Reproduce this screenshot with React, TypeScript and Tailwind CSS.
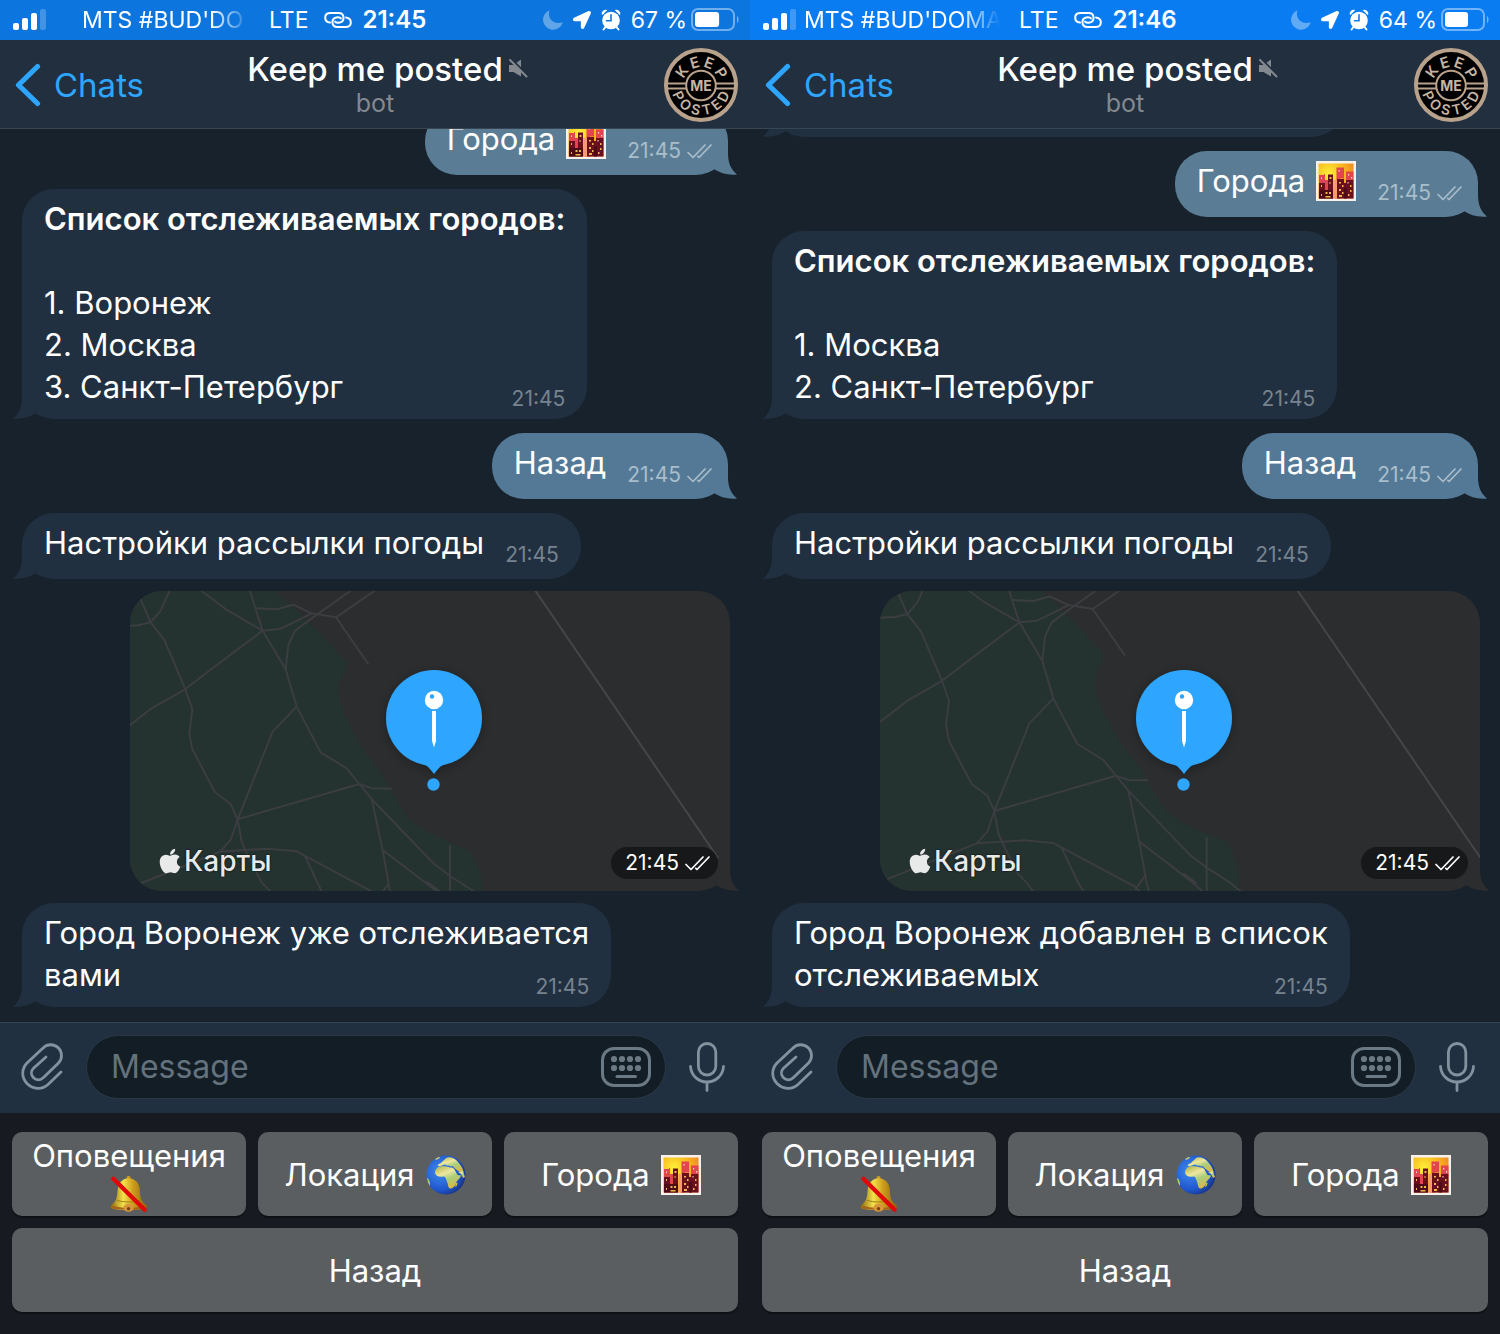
import React, { useId } from "react";
import { FaApple, FaLocationArrow } from "react-icons/fa";

/* ---------- status bar icons ---------- */

function SignalIcon() {
  return (
    <svg width="33" height="22" viewBox="0 0 33 22" fill="#fff" className="shrink-0">
      <rect x="0" y="14" width="6" height="7" rx="2" />
      <rect x="9" y="9" width="6" height="12" rx="2" />
      <rect x="18" y="4" width="6" height="17" rx="2" />
      <rect x="27" y="0" width="6" height="21" rx="2" opacity="0.22" />
    </svg>
  );
}

function HotspotIcon() {
  return (
    <svg width="28" height="18" viewBox="-0.5 -1 28 18" fill="none" stroke="#fff" strokeWidth="2" strokeLinecap="round" className="shrink-0">
      <path d="M5.500 10.600C-1 9.800-1 1 6 1h8c6.500 0 6.500 8.600 1.200 9.600-1.600.3-3.600.3-4.600-1" />
      <path d="M21.500 5.400c6.500.8 6.500 9.600-.5 9.600h-8C6.500 15 6.500 6.400 11.800 5.400c1.600-.3 3.600-.3 4.600 1" />
    </svg>
  );
}

function MoonIcon() {
  return (
    <svg width="20" height="20" viewBox="0 0 20 20" fill="#fff" opacity="0.35" className="shrink-0">
      <path d="M6.500.3C4 7.500 9.500 15.300 19.700 12.300A10 10 0 1 1 6.500.3z" />
    </svg>
  );
}

function AlarmIcon({ cut }: { cut: string }) {
  return (
    <svg width="20" height="22" viewBox="0 0 20 22" className="shrink-0">
      <g fill="#fff">
        <circle cx="10" cy="11.500" r="8.800" />
        <path d="M.8 5.800A4 4 0 0 1 6.300 1.100L1.700 5.800z" />
        <path d="M19.200 5.800A4 4 0 0 0 13.700 1.100l4.600 4.700z" />
      </g>
      <path d="M4.500 18l-2 2.500M15.500 18l2 2.500" stroke="#fff" strokeWidth="2" strokeLinecap="round" />
      <path d="M10 5.800v6H5.500" fill="none" stroke={cut} strokeWidth="1.600" strokeLinecap="round" />
    </svg>
  );
}

function BatteryIcon({ level }: { level: number }) {
  return (
    <svg width="48" height="24" viewBox="0 0 48 24" className="shrink-0">
      <rect x="1" y="1" width="42" height="21" rx="6" fill="none" stroke="#fff" strokeOpacity="0.42" strokeWidth="2" />
      <rect x="4" y="4" width={(level * 36) / 100} height="15" rx="3" fill="#fff" />
      <path d="M46 8c2 1 2 6 0 7z" fill="#fff" fillOpacity="0.45" />
    </svg>
  );
}

/* ---------- header icons ---------- */

function BackIcon() {
  return (
    <svg width="29" height="44" viewBox="-3 0 29 44" fill="none" stroke="#2ea6ff" strokeWidth="5.200" strokeLinecap="round" strokeLinejoin="round">
      <path d="M22.500 3.500L3.500 22l19 18.500" />
    </svg>
  );
}

function MutedIcon() {
  return (
    <svg width="19" height="20" viewBox="0 0 19 20" aria-label="Muted">
      <path d="M0 6h4.500L12 .5v17L4.500 13H0z" fill="#83898f" />
      <path d="M1.500-.5l18 18" stroke="#212f3f" strokeWidth="2.500" />
      <path d="M1 1l16.500 16.500" stroke="#83898f" strokeWidth="2" strokeLinecap="round" />
    </svg>
  );
}

const TOP_LETTERS: [string, number][] = [["K", -55], ["E", -16], ["E", 20], ["P", 59]];
const BOTTOM_LETTERS: [string, number][] = [["P", 64], ["O", 38], ["S", 12], ["T", -13], ["E", -38], ["D", -63]];

function BotLogo() {
  return (
    <svg viewBox="0 0 74 74" className="size-[74px]" fontFamily="Inter, sans-serif" fontWeight="600" textAnchor="middle">
      <circle cx="37" cy="37" r="35" fill="#000" stroke="#b8a28c" strokeWidth="4" />
      <path d="M4 35.500h18M4 40.500h18M52 35.500h18M52 40.500h18" stroke="#b8a28c" strokeWidth="1.800" />
      <circle cx="37" cy="37.500" r="14.800" fill="#000" stroke="#b8a28c" strokeWidth="2" />
      <g fill="#c6b5a2">
        {TOP_LETTERS.map(([ch, a], i) => (
          <text key={i} x="37" y="19" fontSize="15" transform={`rotate(${a} 37 37)`}>{ch}</text>
        ))}
        {BOTTOM_LETTERS.map(([ch, a], i) => (
          <text key={i} x="37" y="67" fontSize="14" transform={`rotate(${a} 37 37)`}>{ch}</text>
        ))}
        <text x="37" y="42.500" fontSize="14" fontWeight="700">ME</text>
      </g>
    </svg>
  );
}

/* ---------- emoji ---------- */

function CityEmoji() {
  const id = useId();
  return (
    <svg width="40" height="40" viewBox="0 0 40 40" className="shrink-0" role="img" aria-label="city at dusk">
      <defs>
        <radialGradient id={id} cx="0.3" cy="0.3" r="0.9">
          <stop offset="0" stopColor="#fff23a" />
          <stop offset="0.5" stopColor="#f8b51c" />
          <stop offset="1" stopColor="#f0742c" />
        </radialGradient>
      </defs>
      <rect width="40" height="40" fill="#f6f1ea" />
      <rect x="2.500" y="2.500" width="35" height="35" fill={`url(#${id})`} />
      <path d="M3 14h5v-1h1v6h3v18H3zM20.500 6.500h7.500v11h-4v20h-5V20h1.500zM30 10.500h7.500v9H30z" fill="#e2454e" />
      <path d="M17.500 19h4v18.500h-4z" fill="#f79a72" />
      <path d="M3 22h6v7h3V13.500h5V37.500H3zM21 18h7v4h2v-3h7.500v18.500H21z" fill="#6a0f1e" />
      <path d="M3 29h14v8.500H3zM28 27h3v10.500h-3z" fill="#4f0a17" />
      <path d="M13.500 16h2v2h-2zM13.500 21h1v2h-1zM5 24h1v2H5zM9.500 31h2v2h-2zM13 31h2v2h-2zM9.500 35h5v1.500h-5zM5 33h1v2H5zM23 21h2v1.500h-2zM26 24h1.500v2H26zM23 28h2v2h-2zM26 31h1.500v2H26zM23 34h3v2h-3zM34 24h1.500v2H34zM34 29h1.500v2H34zM32 33h1.500v2H32z" fill="#e8b84a" />
      <path d="M22.500 9h1.200v1.500h-1.200zM32 13h1.200v1.500H32zM35 16h1.200v1.500H35zM31.500 21h1v1.500h-1zM5 16.500h1V18H5z" fill="#ffd9d0" />
    </svg>
  );
}

function GlobeEmoji() {
  const id = useId();
  return (
    <svg width="40" height="40" viewBox="0 0 40 40" className="shrink-0" role="img" aria-label="globe">
      <defs>
        <radialGradient id={`${id}s`} cx="0.35" cy="0.4" r="0.7">
          <stop offset="0" stopColor="#3f8df0" />
          <stop offset="0.7" stopColor="#1f55cc" />
          <stop offset="1" stopColor="#173079" />
        </radialGradient>
        <linearGradient id={`${id}l`} x1="0" y1="0" x2="0.5" y2="1">
          <stop offset="0" stopColor="#a9b43f" />
          <stop offset="0.4" stopColor="#efe6a0" />
          <stop offset="0.65" stopColor="#a9cf7a" />
          <stop offset="1" stopColor="#d8b94a" />
        </linearGradient>
        <clipPath id={`${id}c`}><circle cx="20" cy="20" r="19.500" /></clipPath>
      </defs>
      <circle cx="20" cy="20" r="19.500" fill={`url(#${id}s)`} />
      <g clipPath={`url(#${id}c)`} fill={`url(#${id}l)`}>
        <path d="M11.500 12.500c2-1.500 8-1.500 11-.5 2.500.8 4.500 0 6 2.500l3 5.500c2 .5 2.500 0 3.500.5-.5 3-4.500 5-5 7.500-.3 3-4 6-6 5.500-2.500-1-1.800-5-3.500-8-1-2.500-1-4-3-4-4 1-8-.5-8.500-3.500 0-2.500 1-4 2.500-5.500z" />
        <path d="M12 11c-.5-2 2-2.500 3-3 1-2 4-3 5-5 3-2 9 0 12 4 3 3 5 7 5.500 10l-3 .5c-2-1-4-3-6-4.500l-2-2c-1 1-3 0-4-.5-2 .5-2-1-4-1-2 1-4 2-6.500 1.500z" />
        <path d="M30 28c1.500-1 2-1 1 2s-2.500 2.500-1-2zM1 23c2 1 3.500 4 3 8l-2-1zM9 3.500l4-2 1 1.500-4 2z" />
        <path d="M32 17l5-1 2 6-2 1-2-4z" />
      </g>
    </svg>
  );
}

function BellEmoji() {
  const id = useId();
  return (
    <svg width="38" height="38" viewBox="0 0 40 38" className="shrink-0" role="img" aria-label="muted bell">
      <defs>
        <linearGradient id={id} x1="0" y1="0" x2="1" y2="0">
          <stop offset="0" stopColor="#8d6a0e" />
          <stop offset="0.35" stopColor="#f4e14a" />
          <stop offset="0.6" stopColor="#d0a01c" />
          <stop offset="1" stopColor="#8a600f" />
        </linearGradient>
      </defs>
      <rect x="17.500" y="0" width="4" height="5" rx="1.500" fill="#c79a1d" />
      <path d="M19.500 2.500C27 3 31 8 31.500 15c.3 9 1.500 12 7 15.500 1.500 2 0 3.500-1.500 4-9 1.800-27 1.800-35 0C.5 34 0 32 1.500 30.500 6.500 27 7.500 23 8 15 8.500 8 12.500 3 19.500 2.500z" fill={`url(#${id})`} />
      <path d="M2.500 31c9 3.500 26 3.500 35 0v3.200c-9 2-27 2-35 0z" fill="#a8631a" />
      <path d="M7 25.500c7 2.500 18 2.500 25.500 0" fill="none" stroke="#9c7a18" strokeWidth="1" />
      <ellipse cx="19.500" cy="33.500" rx="5.500" ry="4.200" fill="#d8963a" />
      <circle cx="19.500" cy="34.500" r="1.800" fill="#7a4410" />
      <path d="M3.500 3L36.500 35.500" stroke="#e00808" strokeWidth="4.500" strokeLinecap="round" />
    </svg>
  );
}

/* ---------- input bar icons ---------- */

function ClipIcon() {
  return (
    <svg width="42" height="48" viewBox="0 0 42 48" fill="none" stroke="#82929f" strokeWidth="2.800" strokeLinecap="round">
      <path d="M40 29L27 41.500C21 47 12 46.500 6 40.500 .3 34.500.3 26 6 20L21.500 5.500C26 .6 33 .6 37.500 5c4 4.200 4 11 0 15L22.500 34.500c-3 3-7.300 3-10 .3-2.700-2.800-2.700-6.800 0-9.500L25 14" />
    </svg>
  );
}

function KeyboardIcon() {
  return (
    <svg width="50" height="40" viewBox="0 0 50 40" fill="#6a7984">
      <rect x="1.500" y="1.500" width="47" height="37" rx="11.500" fill="none" stroke="#6a7984" strokeWidth="3" />
      {[13, 21, 29, 37].map((x) => (
        <g key={x}>
          <circle cx={x} cy="12" r="3.100" />
          <circle cx={x} cy="21" r="3.100" />
        </g>
      ))}
      <rect x="14.500" y="28" width="21.500" height="3" rx="1.500" />
    </svg>
  );
}

function MicIcon() {
  return (
    <svg width="36" height="50" viewBox="0 0 36 50" fill="none" stroke="#82929f" strokeWidth="2.800" strokeLinecap="round">
      <rect x="9.400" y="1.500" width="17.400" height="31.500" rx="8.700" />
      <path d="M1.500 24.500c.5 9 8 15.500 16.500 15.500s16-6.500 16.500-15.500M18 40v8.500" />
    </svg>
  );
}

/* ---------- messages ---------- */

function Checks() {
  return (
    <svg width="25" height="15" viewBox="0 0 25 15" fill="none" stroke="currentColor" strokeWidth="1.700" strokeLinecap="round" strokeLinejoin="round">
      <path d="M1 8.500l5 5L18 1M12 13.500L24 1M10.800 12.300l1.200 1.200" />
    </svg>
  );
}

function Tail({ side, color }: { side: "left" | "right"; color: string }) {
  const place = side === "left" ? "-left-[9px]" : "-right-[9px] -scale-x-100";
  return (
    <svg width="24" height="33" viewBox="0 0 24 33" className={`absolute bottom-0 ${place}`}>
      <path d="M9 0v11c0 10-3 16.500-9 21.500 9 1 17-1.500 23-5.500L24 0z" fill={color} />
    </svg>
  );
}

function Time({ sent }: { sent?: boolean }) {
  return (
    <span className={`flex items-center gap-1.5 text-[21px] leading-[18px] ${sent ? "text-[#a9bdcb]" : "text-[#76838f]"}`}>
      21:45
      {sent && <Checks />}
    </span>
  );
}

function Incoming({ children, stacked }: { children: React.ReactNode; stacked?: boolean }) {
  return (
    <div className="relative mx-0.5 min-h-[66px] max-w-[600px] shrink-0 self-start rounded-[32px] bg-[#213040] px-[22px] pt-[9px] pb-[11px]">
      <Tail side="left" color="#213040" />
      {stacked ? (
        <div className="grid">
          <div className="col-start-1 row-start-1">{children}</div>
          <div className="col-start-1 row-start-1 self-end justify-self-end">
            <Time />
          </div>
        </div>
      ) : (
        <div className="flex items-end gap-[21px]">
          <span>{children}</span>
          <Time />
        </div>
      )}
    </div>
  );
}

function Outgoing({ children, tone }: { children: React.ReactNode; tone: "warm" | "cool" }) {
  const warm = tone === "warm";
  return (
    <div className={`relative mx-0.5 shrink-0 self-end rounded-[32px] pt-[9px] pr-4 pb-[15px] pl-[22px] ${warm ? "bg-[#5a7d95]" : "bg-[#537996]"}`}>
      <Tail side="right" color={warm ? "#5a7d95" : "#537996"} />
      <div className="flex items-end gap-[21px]">
        <span className="flex items-center gap-[11px]">{children}</span>
        <Time sent />
      </div>
    </div>
  );
}

const ROADS = [
  "M45 20L92 127L133 180L195 325L217 388L208 460L217 508L285 637L332 672L353 718L365 785L378 815L425 908L452 935L480 975",
  "M0 139L55 136L92 127L122 92L150 30L165 -10",
  "M-10 465L30 435L95 385L195 328L300 248L428 152",
  "M210 5L245 33L318 88L428 152L480 147L520 128L575 100",
  "M380 0L406 85L428 152L497 268L530 380L602 517L680 565L718 612L755 657L940 850L990 888L1060 933L1100 965",
  "M406 85L470 88L520 74L575 100L648 112L745 252M648 112L770 28",
  "M497 268L505 195L525 152L585 108L695 30L730 0",
  "M530 380L458 455L353 718L718 612L755 625L815 626",
  "M353 718L332 780L300 815L0 935M300 815L440 806L530 814L555 828L775 945L800 970",
  "M555 828L605 935L625 965M755 657L788 810L810 935L820 970M788 810L945 930L990 970M805 912L775 955",
  "M990 795L990 975M920 905L960 935",
];

function MapCard({ shifted }: { shifted?: boolean }) {
  const id = useId();
  return (
    <div className="relative -my-0.5 h-[300px] w-[600px] max-w-full shrink-0 self-end">
      <Tail side="right" color="#2c2d2f" />
      <div className="h-full overflow-hidden rounded-[32px] bg-[#2c2d2f]">
        <svg viewBox="0 0 600 300" preserveAspectRatio="xMidYMid slice" className="h-full w-full">
          <defs>
            <filter id={id} x="-30%" y="-30%" width="160%" height="160%">
              <feDropShadow dx="0" dy="2" stdDeviation="6" floodColor="#000" floodOpacity="0.3" />
            </filter>
          </defs>
          <g transform={shifted ? "translate(-3.300 -19.300) scale(0.3333)" : "translate(-10 -11) scale(0.3333)"}>
            <path
              d="M-60 -60H380L465 33L530 90L590 150L660 225Q690 250 672 278Q650 315 656 345Q662 380 680 420L730 510L790 590L830 660Q850 700 870 722L930 760L1050 812Q1076 850 1085 900L1088 1000H-60z"
              fill="#243230"
            />
            <g fill="none" stroke="#3b3d40" strokeWidth="6" strokeLinejoin="round">
              {ROADS.map((d) => (
                <path key={d} d={d} />
              ))}
            </g>
            <path d="M1220 -6L1860 930" stroke="#454649" strokeWidth="6" />
          </g>
          <g filter={`url(#${id})`} fill="#2ea6ff">
            <circle cx="304" cy="127" r="48" />
            <path d="M288 170l8 4.500q3 1.500 8 8.500 5-7 8-8.500l8-4.500z" />
          </g>
          <circle cx="303.500" cy="193.500" r="6.200" fill="#2ea6ff" />
          <circle cx="304" cy="109" r="9.200" fill="#fff" />
          <circle cx="302" cy="105.500" r="2.200" fill="#2ea6ff" />
          <path d="M302 120h4v30l-2 6.500-2-6.500z" fill="#fff" />
        </svg>
      </div>
      <div className="absolute bottom-3 left-[26px] flex items-center text-[#e8e9e9] [text-shadow:0_0_2px_#000]">
        <FaApple className="size-7" />
        <span className="text-[28px] leading-9 font-medium">Карты</span>
      </div>
      <div className="absolute right-3 bottom-3 flex h-8 items-center gap-1.5 rounded-full bg-[#171819] pr-2 pl-3.5 text-[21px] text-white">
        21:45
        <Checks />
      </div>
    </div>
  );
}

/* ---------- phone ---------- */

function KeyButton({ children, className = "" }: { children: React.ReactNode; className?: string }) {
  return (
    <button type="button" className={`flex h-[84px] items-center justify-center rounded-[10px] bg-[#5b5e61] pt-0.5 text-[31px] shadow-[0_2px_0_#0f1115] ${className}`}>
      {children}
    </button>
  );
}

type PhoneProps = {
  clock: string;
  battery: number;
  accent: string;
  barClass: string;
  carrier: string;
  carrierClass: string;
  inputId: string;
  shiftedMap?: boolean;
  children: React.ReactNode;
  reply: React.ReactNode;
};

function Phone({ clock, battery, accent, barClass, carrier, carrierClass, inputId, shiftedMap, children, reply }: PhoneProps) {
  return (
    <section className="flex min-h-0 min-w-0 flex-col">
      <div className={`flex h-10 shrink-0 items-center pr-[11px] pl-[13px] text-[23px] text-white ${barClass}`}>
        <SignalIcon />
        <span className={`ml-2 w-[196px] overflow-hidden whitespace-nowrap [mask-image:linear-gradient(to_right,#000_80%,transparent)] ${carrierClass}`}>
          {carrier}
        </span>
        <span className="ml-[19px]">LTE</span>
        <span className="mx-4 sm:mr-2.5"><HotspotIcon /></span>
        <span className="text-[24px] font-semibold">{clock}</span>
        <div className="ml-auto flex items-center gap-2.5">
          <MoonIcon />
          <FaLocationArrow className="size-[18px]" />
          <AlarmIcon cut={accent} />
          <span className="whitespace-nowrap">{battery} %</span>
          <span className="-ml-1.5"><BatteryIcon level={battery} /></span>
        </div>
      </div>

      <header className="grid h-[89px] shrink-0 grid-cols-[1fr_auto_1fr] items-center border-b border-[#384654] bg-[#212f3f] px-3 pt-0.5 text-[33px]">
        <button type="button" className="flex items-center gap-[13px] justify-self-start text-[#2ea6ff]">
          <BackIcon />
          Chats
        </button>
        <div className="text-center">
          <h1 className="relative leading-9 font-medium">
            Keep me posted
            <span className="absolute top-2 left-full ml-1.5"><MutedIcon /></span>
          </h1>
          <p className="text-[25px] leading-8 text-[#83898f]">bot</p>
        </div>
        <a href="#profile" aria-label="Keep me posted profile" className="justify-self-end">
          <BotLogo />
        </a>
      </header>

      <main className="flex min-h-0 flex-1 flex-col justify-end gap-3.5 overflow-hidden bg-[#18222c] px-5 pb-[15px] text-[31px]">
        {children}
        <Outgoing tone="cool">Назад</Outgoing>
        <Incoming>Настройки рассылки погоды</Incoming>
        <MapCard shifted={shiftedMap} />
        <Incoming stacked>{reply}</Incoming>
      </main>

      <form className="flex h-[91px] shrink-0 items-center gap-[23px] border-t border-[#344352] bg-[#213040] pr-[25px] pb-0.5 pl-[21px]">
        <button type="button" aria-label="Attach"><ClipIcon /></button>
        <div className="flex h-16 min-w-0 flex-1 items-center rounded-full border border-[#2a3745] bg-[#131d25] pr-3.5 pl-6">
          <label htmlFor={inputId} className="sr-only">Message</label>
          <input id={inputId} placeholder="Message" className="min-w-0 flex-1 bg-transparent outline-none placeholder:text-[#64727d]" />
          <button type="button" aria-label="Keyboard"><KeyboardIcon /></button>
        </div>
        <button type="button" aria-label="Record voice message"><MicIcon /></button>
      </form>

      <div className="grid shrink-0 grid-cols-3 gap-3 bg-[#171a21] px-3 pt-[19px] pb-[22px]">
        <KeyButton className="flex-col leading-[38px]">
          Оповещения
          <BellEmoji />
        </KeyButton>
        <KeyButton className="gap-[11px]">Локация <GlobeEmoji /></KeyButton>
        <KeyButton className="gap-[11px]">Города <CityEmoji /></KeyButton>
        <KeyButton className="col-span-3">Назад</KeyButton>
      </div>
    </section>
  );
}

function CityList({ cities }: { cities: string[] }) {
  return (
    <>
      <p className="mb-[42px] font-semibold">Список отслеживаемых городов:</p>
      <ol>
        {cities.map((city, i) => (
          <li key={city}>{i + 1}. {city}</li>
        ))}
      </ol>
    </>
  );
}

export default function App() {
  return (
    <div className="grid h-screen grid-cols-2 bg-[#171a21] font-[Inter,sans-serif] text-[32px] leading-[42px] text-white">
      <Phone
        clock="21:45"
        battery={67}
        accent="#0c75de"
        barClass="bg-[#0c75de]"
        carrier="MTS #BUD'DO"
        carrierClass="pl-7"
        inputId="message-left"
        reply={<>Город Воронеж уже отслеживается<br />вами</>}
      >
        <Outgoing tone="warm">Города <CityEmoji /></Outgoing>
        <Incoming stacked><CityList cities={["Воронеж", "Москва", "Санкт-Петербург"]} /></Incoming>
      </Phone>
      <Phone
        clock="21:46"
        battery={64}
        accent="#0a7cf2"
        barClass="bg-[#0a7cf2]"
        carrier="MTS #BUD'DOMA"
        carrierClass=""
        inputId="message-right"
        shiftedMap
        reply={<>Город Воронеж добавлен в список<br />отслеживаемых</>}
      >
        <div className="relative mx-0.5 h-[66px] w-[572px] shrink-0 rounded-[32px] bg-[#213040]">
          <Tail side="left" color="#213040" />
        </div>
        <Outgoing tone="warm">Города <CityEmoji /></Outgoing>
        <Incoming stacked><CityList cities={["Москва", "Санкт-Петербург"]} /></Incoming>
      </Phone>
    </div>
  );
}
